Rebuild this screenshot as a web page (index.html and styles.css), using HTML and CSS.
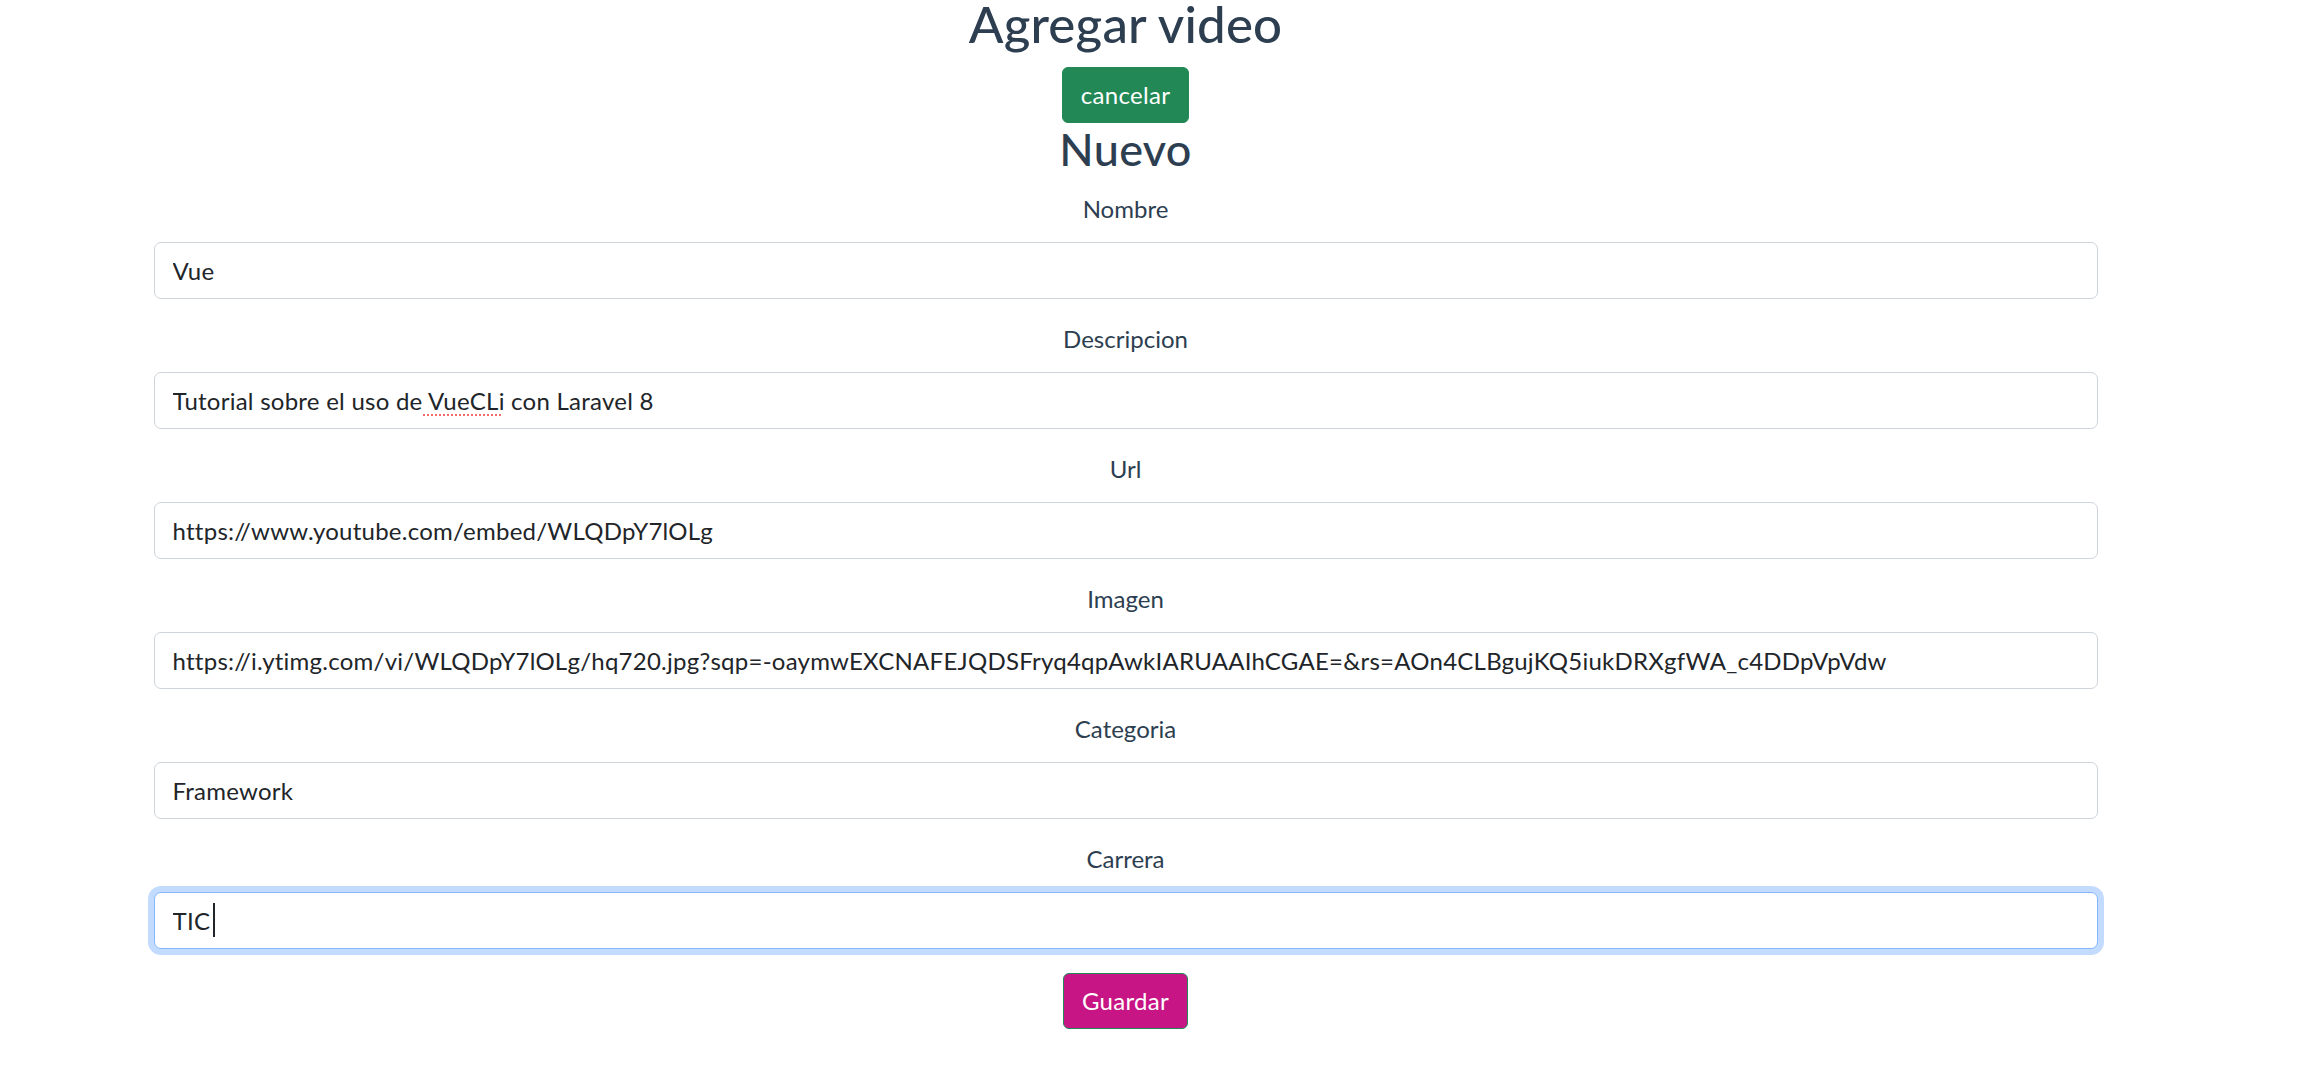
FILE: index.html
```html
<!DOCTYPE html>
<html lang="es">
<head>
<meta charset="utf-8">
<title>Agregar video</title>
<link rel="stylesheet" href="styles.css">
</head>
<body>
<div class="app">
  <h1 class="title">Agregar video</h1>
  <button class="btn btn-cancel" type="button">cancelar</button>
  <div class="container">
    <h2 class="subtitle">Nuevo</h2>
    <form class="form">
      <div class="field">
        <label class="field-label" for="nombre">Nombre</label>
        <input class="form-control" id="nombre" type="text" value="Vue">
      </div>
      <div class="field">
        <label class="field-label" for="descripcion">Descripcion</label>
        <div class="input-wrap">
          <input class="form-control" id="descripcion" type="text" value="Tutorial sobre el uso de VueCLi con Laravel 8">
          <span class="spell-mark"></span>
        </div>
      </div>
      <div class="field">
        <label class="field-label" for="url">Url</label>
        <input class="form-control" id="url" type="text" value="https://www.youtube.com/embed/WLQDpY7lOLg">
      </div>
      <div class="field">
        <label class="field-label" for="imagen">Imagen</label>
        <input class="form-control" id="imagen" type="text" value="https://i.ytimg.com/vi/WLQDpY7lOLg/hq720.jpg?sqp=-oaymwEXCNAFEJQDSFryq4qpAwkIARUAAIhCGAE=&amp;rs=AOn4CLBgujKQ5iukDRXgfWA_c4DDpVpVdw">
      </div>
      <div class="field">
        <label class="field-label" for="categoria">Categoria</label>
        <input class="form-control" id="categoria" type="text" value="Framework">
      </div>
      <div class="field field-last">
        <label class="field-label" for="carrera">Carrera</label>
        <div class="input-wrap">
          <input class="form-control is-focused" id="carrera" type="text" value="TIC">
          <span class="caret"></span>
        </div>
      </div>
      <button class="btn btn-save" type="button">Guardar</button>
    </form>
  </div>
</div>
</body>
</html>
```
FILE: styles.css
```css
html, body {
  margin: 0;
  padding: 0;
  background: #ffffff;
}

body {
  font-family: Lato, "Open Sans", sans-serif;
  color: #2c3e50;
}

.app {
  width: 2251px;
  display: flex;
  flex-direction: column;
  align-items: center;
  text-align: center;
}

.title {
  margin: 0;
  font-size: 51px;
  line-height: 48px;
  font-weight: 500;
  letter-spacing: 0.2px;
  color: #2c3e50;
}

.btn {
  font-family: inherit;
  font-size: 24px;
  line-height: 36px;
  padding: 9px 18px;
  border-radius: 6px;
  color: #ffffff;
  letter-spacing: 0.3px;
  cursor: pointer;
}

.btn-cancel {
  margin-top: 19px;
  background: #218856;
  border: 1.5px solid #218856;
}

.container {
  width: 1944px;
  display: flex;
  flex-direction: column;
  align-items: center;
}

.subtitle {
  margin: 0 0 19px;
  font-size: 45px;
  line-height: 52px;
  font-weight: 500;
  letter-spacing: 0.3px;
  color: #2c3e50;
}

.form {
  width: 100%;
  display: flex;
  flex-direction: column;
  align-items: center;
}

.field {
  width: 100%;
  display: flex;
  flex-direction: column;
  margin-bottom: 25px;
}

.field-last {
  margin-bottom: 24px;
}

.field-label {
  font-size: 24px;
  line-height: 30px;
  margin-bottom: 18px;
  color: #2c3e50;
}

.input-wrap {
  position: relative;
  width: 100%;
}

.form-control {
  display: block;
  box-sizing: border-box;
  width: 100%;
  height: 57px;
  padding: 9px 18px;
  font-family: inherit;
  font-size: 24px;
  line-height: 36px;
  letter-spacing: 0.25px;
  color: #212529;
  background: #ffffff;
  border: 1.5px solid #ced4da;
  border-radius: 7px;
  outline: none;
  caret-color: #212529;
}

.form-control.is-focused,
.form-control:focus {
  border-color: #86b7fe;
  box-shadow: 0 0 0 6px rgba(13, 110, 253, 0.25);
}

.spell-mark {
  position: absolute;
  left: 269px;
  top: 42px;
  width: 78px;
  height: 2px;
  background: repeating-linear-gradient(to right, #f46b6b 0 2px, transparent 2px 4px);
}

.caret {
  position: absolute;
  left: 59px;
  top: 11px;
  width: 2px;
  height: 34px;
  background: #212529;
}

.btn-save {
  background: #c71585;
  border: 1.5px solid #218856;
}
```
